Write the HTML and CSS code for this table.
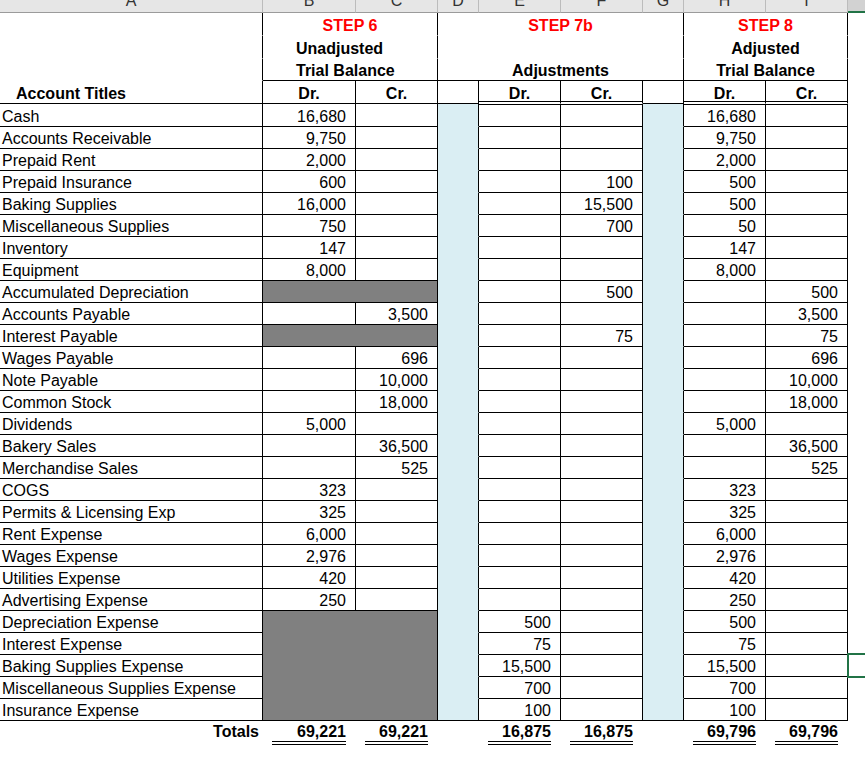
FILE: index.html
```html
<!DOCTYPE html>
<html lang="en">
<head>
<meta charset="utf-8">
<title>Trial Balance Worksheet</title>
<link rel="stylesheet" href="styles.css">
</head>
<body>
<div class="sheet">
  <!-- column headers -->
  <div class="ch"><span>A</span></div>
  <div class="ch"><span>B</span></div>
  <div class="ch"><span>C</span></div>
  <div class="ch"><span>D</span></div>
  <div class="ch"><span>E</span></div>
  <div class="ch"><span>F</span></div>
  <div class="ch"><span>G</span></div>
  <div class="ch"><span>H</span></div>
  <div class="ch"><span>I</span></div>
  <div class="ch sel"></div>

  <!-- header row 1 -->
  <div class="c nb"></div>
  <div class="c nb h red span2">STEP 6</div>
  <div class="c nb h red span4">STEP 7b</div>
  <div class="c nb h red span2">STEP 8</div>
  <div class="j"></div>

  <!-- header row 2 -->
  <div class="c nb"></div>
  <div class="c nb b ind span2">Unadjusted</div>
  <div class="c nb span4"></div>
  <div class="c nb h span2">Adjusted</div>
  <div class="j"></div>

  <!-- header row 3 -->
  <div class="c nb"></div>
  <div class="c b ind span2">Trial Balance</div>
  <div class="c h span4">Adjustments</div>
  <div class="c h span2">Trial Balance</div>
  <div class="j"></div>

  <!-- header row 4 -->
  <div class="c b titles">Account Titles</div>
  <div class="c h">Dr.</div>
  <div class="c h">Cr.</div>
  <div class="c"></div>
  <div class="c h dbl">Dr.</div>
  <div class="c h dbl">Cr.</div>
  <div class="c"></div>
  <div class="c h dbl">Dr.</div>
  <div class="c h dbl">Cr.</div>
  <div class="j"></div>

  <!-- data -->
  <div class="c t">Cash</div><div class="c n">16,680</div><div class="c n"></div><div class="c blue"></div><div class="c n top2"></div><div class="c n top2"></div><div class="c blue"></div><div class="c n top2">16,680</div><div class="c n top2"></div><div class="j"></div>
  <div class="c t">Accounts Receivable</div><div class="c n">9,750</div><div class="c n"></div><div class="c blue"></div><div class="c n"></div><div class="c n"></div><div class="c blue"></div><div class="c n">9,750</div><div class="c n"></div><div class="j"></div>
  <div class="c t">Prepaid Rent</div><div class="c n">2,000</div><div class="c n"></div><div class="c blue"></div><div class="c n"></div><div class="c n"></div><div class="c blue"></div><div class="c n">2,000</div><div class="c n"></div><div class="j"></div>
  <div class="c t">Prepaid Insurance</div><div class="c n">600</div><div class="c n"></div><div class="c blue"></div><div class="c n"></div><div class="c n">100</div><div class="c blue"></div><div class="c n">500</div><div class="c n"></div><div class="j"></div>
  <div class="c t">Baking Supplies</div><div class="c n">16,000</div><div class="c n"></div><div class="c blue"></div><div class="c n"></div><div class="c n">15,500</div><div class="c blue"></div><div class="c n">500</div><div class="c n"></div><div class="j"></div>
  <div class="c t">Miscellaneous Supplies</div><div class="c n">750</div><div class="c n"></div><div class="c blue"></div><div class="c n"></div><div class="c n">700</div><div class="c blue"></div><div class="c n">50</div><div class="c n"></div><div class="j"></div>
  <div class="c t">Inventory</div><div class="c n">147</div><div class="c n"></div><div class="c blue"></div><div class="c n"></div><div class="c n"></div><div class="c blue"></div><div class="c n">147</div><div class="c n"></div><div class="j"></div>
  <div class="c t">Equipment</div><div class="c n">8,000</div><div class="c n"></div><div class="c blue"></div><div class="c n"></div><div class="c n"></div><div class="c blue"></div><div class="c n">8,000</div><div class="c n"></div><div class="j"></div>
  <div class="c t">Accumulated Depreciation</div><div class="c gray"></div><div class="c blue"></div><div class="c n"></div><div class="c n">500</div><div class="c blue"></div><div class="c n"></div><div class="c n">500</div><div class="j"></div>
  <div class="c t">Accounts Payable</div><div class="c n"></div><div class="c n">3,500</div><div class="c blue"></div><div class="c n"></div><div class="c n"></div><div class="c blue"></div><div class="c n"></div><div class="c n">3,500</div><div class="j"></div>
  <div class="c t">Interest Payable</div><div class="c gray"></div><div class="c blue"></div><div class="c n"></div><div class="c n">75</div><div class="c blue"></div><div class="c n"></div><div class="c n">75</div><div class="j"></div>
  <div class="c t">Wages Payable</div><div class="c n"></div><div class="c n">696</div><div class="c blue"></div><div class="c n"></div><div class="c n"></div><div class="c blue"></div><div class="c n"></div><div class="c n">696</div><div class="j"></div>
  <div class="c t">Note Payable</div><div class="c n"></div><div class="c n">10,000</div><div class="c blue"></div><div class="c n"></div><div class="c n"></div><div class="c blue"></div><div class="c n"></div><div class="c n">10,000</div><div class="j"></div>
  <div class="c t">Common Stock</div><div class="c n"></div><div class="c n">18,000</div><div class="c blue"></div><div class="c n"></div><div class="c n"></div><div class="c blue"></div><div class="c n"></div><div class="c n">18,000</div><div class="j"></div>
  <div class="c t">Dividends</div><div class="c n">5,000</div><div class="c n"></div><div class="c blue"></div><div class="c n"></div><div class="c n"></div><div class="c blue"></div><div class="c n">5,000</div><div class="c n"></div><div class="j"></div>
  <div class="c t">Bakery Sales</div><div class="c n"></div><div class="c n">36,500</div><div class="c blue"></div><div class="c n"></div><div class="c n"></div><div class="c blue"></div><div class="c n"></div><div class="c n">36,500</div><div class="j"></div>
  <div class="c t">Merchandise Sales</div><div class="c n"></div><div class="c n">525</div><div class="c blue"></div><div class="c n"></div><div class="c n"></div><div class="c blue"></div><div class="c n"></div><div class="c n">525</div><div class="j"></div>
  <div class="c t">COGS</div><div class="c n">323</div><div class="c n"></div><div class="c blue"></div><div class="c n"></div><div class="c n"></div><div class="c blue"></div><div class="c n">323</div><div class="c n"></div><div class="j"></div>
  <div class="c t">Permits &amp; Licensing Exp</div><div class="c n">325</div><div class="c n"></div><div class="c blue"></div><div class="c n"></div><div class="c n"></div><div class="c blue"></div><div class="c n">325</div><div class="c n"></div><div class="j"></div>
  <div class="c t">Rent Expense</div><div class="c n">6,000</div><div class="c n"></div><div class="c blue"></div><div class="c n"></div><div class="c n"></div><div class="c blue"></div><div class="c n">6,000</div><div class="c n"></div><div class="j"></div>
  <div class="c t">Wages Expense</div><div class="c n">2,976</div><div class="c n"></div><div class="c blue"></div><div class="c n"></div><div class="c n"></div><div class="c blue"></div><div class="c n">2,976</div><div class="c n"></div><div class="j"></div>
  <div class="c t">Utilities Expense</div><div class="c n">420</div><div class="c n"></div><div class="c blue"></div><div class="c n"></div><div class="c n"></div><div class="c blue"></div><div class="c n">420</div><div class="c n"></div><div class="j"></div>
  <div class="c t">Advertising Expense</div><div class="c n">250</div><div class="c n"></div><div class="c blue"></div><div class="c n"></div><div class="c n"></div><div class="c blue"></div><div class="c n">250</div><div class="c n"></div><div class="j"></div>
  <div class="c t">Depreciation Expense</div><div class="c gray rows5"></div><div class="c blue"></div><div class="c n">500</div><div class="c n"></div><div class="c blue"></div><div class="c n">500</div><div class="c n"></div><div class="j"></div>
  <div class="c t">Interest Expense</div><div class="c blue"></div><div class="c n">75</div><div class="c n"></div><div class="c blue"></div><div class="c n">75</div><div class="c n"></div><div class="j"></div>
  <div class="c t">Baking Supplies Expense</div><div class="c blue"></div><div class="c n">15,500</div><div class="c n"></div><div class="c blue"></div><div class="c n">15,500</div><div class="c n"></div><div class="j selcell"></div>
  <div class="c t">Miscellaneous Supplies Expense</div><div class="c blue"></div><div class="c n">700</div><div class="c n"></div><div class="c blue"></div><div class="c n">700</div><div class="c n"></div><div class="j"></div>
  <div class="c t">Insurance Expense</div><div class="c blue last"></div><div class="c n">100</div><div class="c n"></div><div class="c blue last"></div><div class="c n">100</div><div class="c n"></div><div class="j"></div>

  <!-- totals -->
  <div class="totlabel">Totals</div>
  <div class="tot"><span>69,221</span></div>
  <div class="tot"><span>69,221</span></div>
  <div></div>
  <div class="tot"><span>16,875</span></div>
  <div class="tot"><span>16,875</span></div>
  <div></div>
  <div class="tot"><span>69,796</span></div>
  <div class="tot"><span>69,796</span></div>
  <div></div>
</div>
</body>
</html>
```

FILE: styles.css
```css
html, body {
  margin: 0;
  padding: 0;
  background: #ffffff;
}

body {
  width: 865px;
  height: 774px;
  overflow: hidden;
  font-family: "Liberation Sans", Arial, sans-serif;
  font-size: 16px;
  color: #000000;
}

.sheet {
  display: grid;
  grid-template-columns: 263px 93px 82px 41px 82px 82px 41px 82px 82px 1fr;
  grid-template-rows: 13px 23px 23px 22px 23px 23px repeat(27, 22px) 30px;
  width: 865px;
}

/* column header strip */
.ch {
  background: #e6e6e6;
  border-right: 1px solid #bcbcbc;
  border-bottom: 1px solid #9b9b9b;
  overflow: hidden;
  text-align: center;
  color: #333333;
  font-size: 16px;
  line-height: 16px;
}

.ch span {
  display: block;
  margin-top: -7px;
}

.ch.sel {
  background: #d2d2d2;
  border-right: none;
  border-bottom: 2px solid #217346;
}

/* cells */
.c {
  border-right: 1px solid #000000;
  border-bottom: 1px solid #000000;
  line-height: 18px;
  display: flex;
  align-items: flex-end;
  white-space: nowrap;
  min-width: 0;
}

.nb {
  border-bottom-color: transparent;
}

.t {
  padding-left: 2px;
}

.n {
  justify-content: flex-end;
  padding-right: 9px;
}

.h {
  justify-content: center;
  font-weight: bold;
}

.b {
  font-weight: bold;
}

.red {
  color: #ff0000;
}

.ind {
  padding-left: 33px;
}

.titles {
  padding-left: 16px;
}

.span2 {
  grid-column: span 2;
}

.span4 {
  grid-column: span 4;
}

.dbl {
  border-bottom-color: transparent;
  box-shadow: inset 0 -1px 0 #ffffff, inset 0 -2px 0 #000000;
}

.top2 {
  box-shadow: inset 0 1px 0 #000000;
}

.blue {
  background: #daeef3;
  border-bottom-color: transparent;
}

.blue.last {
  border-bottom-color: #000000;
}

.gray {
  background: #808080;
  grid-column: span 2;
}

.rows5 {
  grid-row: span 5;
}

.j {
  background: #ffffff;
}

.selcell {
  position: relative;
}

.selcell::after {
  content: "";
  position: absolute;
  left: -1px;
  top: -2px;
  bottom: -1px;
  right: -12px;
  border: 2px solid #217346;
}

/* totals */
.totlabel {
  font-weight: bold;
  text-align: right;
  padding: 2px 4px 0 0;
  line-height: 18px;
}

.tot {
  padding: 2px 10px 0 9px;
  font-weight: bold;
}

.tot span {
  display: block;
  text-align: right;
  line-height: 18px;
  border-bottom: 4px double #000000;
}
```
